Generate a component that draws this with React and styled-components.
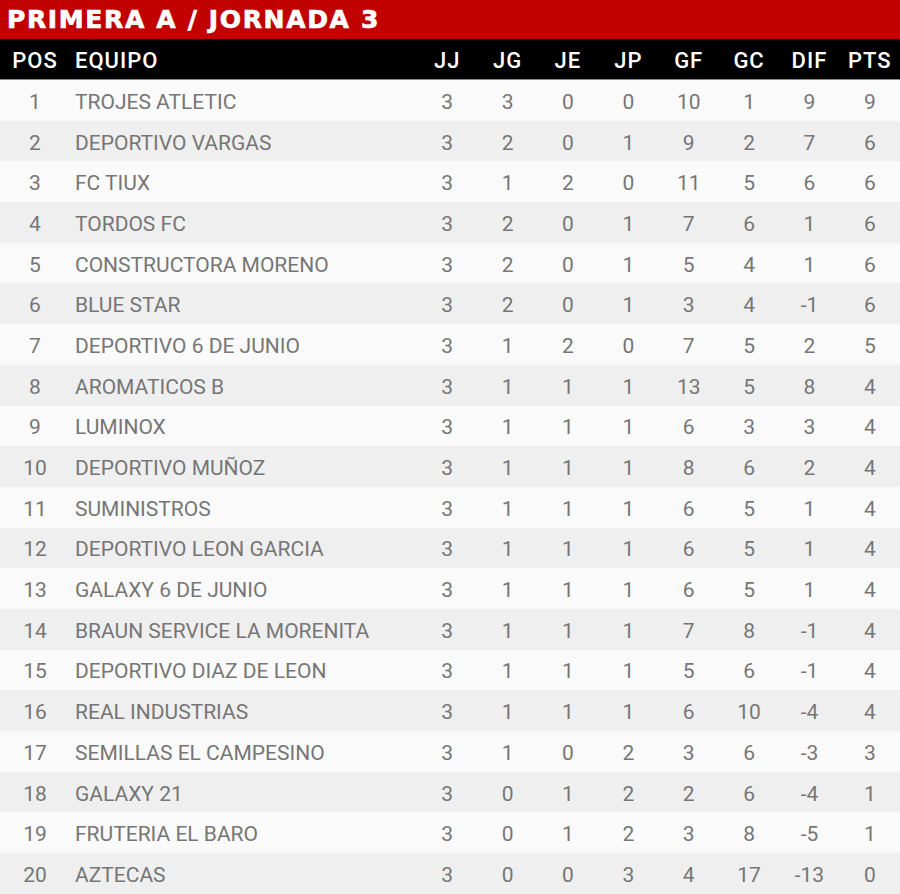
import React from "react";
import styled, { createGlobalStyle } from "styled-components";

const teams = [
  [1, "TROJES ATLETIC", 3, 3, 0, 0, 10, 1, 9, 9],
  [2, "DEPORTIVO VARGAS", 3, 2, 0, 1, 9, 2, 7, 6],
  [3, "FC TIUX", 3, 1, 2, 0, 11, 5, 6, 6],
  [4, "TORDOS FC", 3, 2, 0, 1, 7, 6, 1, 6],
  [5, "CONSTRUCTORA MORENO", 3, 2, 0, 1, 5, 4, 1, 6],
  [6, "BLUE STAR", 3, 2, 0, 1, 3, 4, -1, 6],
  [7, "DEPORTIVO 6 DE JUNIO", 3, 1, 2, 0, 7, 5, 2, 5],
  [8, "AROMATICOS B", 3, 1, 1, 1, 13, 5, 8, 4],
  [9, "LUMINOX", 3, 1, 1, 1, 6, 3, 3, 4],
  [10, "DEPORTIVO MUÑOZ", 3, 1, 1, 1, 8, 6, 2, 4],
  [11, "SUMINISTROS", 3, 1, 1, 1, 6, 5, 1, 4],
  [12, "DEPORTIVO LEON GARCIA", 3, 1, 1, 1, 6, 5, 1, 4],
  [13, "GALAXY 6 DE JUNIO", 3, 1, 1, 1, 6, 5, 1, 4],
  [14, "BRAUN SERVICE LA MORENITA", 3, 1, 1, 1, 7, 8, -1, 4],
  [15, "DEPORTIVO DIAZ DE LEON", 3, 1, 1, 1, 5, 6, -1, 4],
  [16, "REAL INDUSTRIAS", 3, 1, 1, 1, 6, 10, -4, 4],
  [17, "SEMILLAS EL CAMPESINO", 3, 1, 0, 2, 3, 6, -3, 3],
  [18, "GALAXY 21", 3, 0, 1, 2, 2, 6, -4, 1],
  [19, "FRUTERIA EL BARO", 3, 0, 1, 2, 3, 8, -5, 1],
  [20, "AZTECAS", 3, 0, 0, 3, 4, 17, -13, 0],
];

const stats = ["JJ", "JG", "JE", "JP", "GF", "GC", "DIF", "PTS"];

export default function App() {
  return (
    <>
      <GlobalStyle />
      <Board>
        <Title>PRIMERA A / JORNADA 3</Title>
        <HeadRow>
          <Pos>POS</Pos>
          <Team>EQUIPO</Team>
          {stats.map((s) => (
            <Stat key={s}>{s}</Stat>
          ))}
        </HeadRow>
        {teams.map(([pos, name, ...nums], i) => (
          <Row key={pos} $alt={i % 2 === 1}>
            <Pos>{pos}</Pos>
            <Team>{name}</Team>
            {nums.map((n, j) => (
              <Stat key={j}>{n}</Stat>
            ))}
          </Row>
        ))}
      </Board>
    </>
  );
}

const GlobalStyle = createGlobalStyle`
  body {
    margin: 0;
    background: #fafafa;
    font-family: Roboto, "Liberation Sans", sans-serif;
  }
`;

const Board = styled.div`
  width: 900px;
  display: flex;
  flex-direction: column;
`;

const Title = styled.div`
  height: 39px;
  background: #c10000;
  color: #fff;
  font-family: "DejaVu Sans", "Liberation Sans", sans-serif;
  font-weight: 700;
  font-size: 25px;
  line-height: 40px;
  padding-left: 7px;
  letter-spacing: 1.65px;
  -webkit-text-stroke: 0.7px #fff;
  white-space: nowrap;
`;

const Grid = styled.div`
  display: grid;
  grid-template-columns: 70px 347px repeat(8, 60.375px);
  align-items: center;
`;

const HeadRow = styled(Grid)`
  height: 41px;
  padding-top: 3px;
  box-sizing: border-box;
  background: #000;
  color: #fff;
  font-size: 22px;
  font-weight: 500;
  letter-spacing: 1px;
  border-bottom: 1px solid #8a8a8a;
`;

const Row = styled(Grid)`
  height: 40.7px;
  padding-top: 3px;
  box-sizing: border-box;
  background: ${(p) => (p.$alt ? "#efefef" : "#fafafa")};
  color: #767676;
  font-size: 21px;
`;

const Pos = styled.div`
  text-align: center;
`;

const Team = styled.div`
  padding-left: 5px;
  white-space: nowrap;
`;

const Stat = styled.div`
  text-align: center;
`;
